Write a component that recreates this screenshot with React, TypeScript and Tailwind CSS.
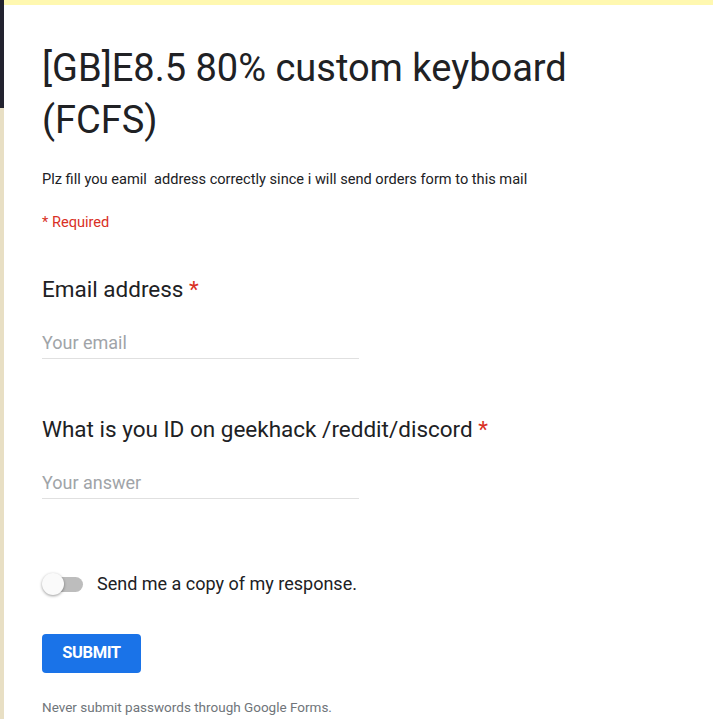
export default function App() {
  return (
    <div className="min-h-screen flex bg-white font-['Roboto','Liberation_Sans',sans-serif]">
      <div className="w-1 shrink-0 flex flex-col">
        <div className="h-[108px] bg-[#23232f]" />
        <div className="flex-1 bg-[#e8dfc4]" />
      </div>
      <div className="flex-1 flex flex-col">
        <div className="h-[5px] bg-[#fff8b0]" />
        <div className="pl-[38px] pt-[37px] pr-6 pb-4">
          <h1 className="max-w-[580px] text-[38px] leading-[52px] text-[#202124] font-normal">
            [GB]E8.5 80% custom keyboard (FCFS)
          </h1>
          <p className="mt-[23px] text-[14.6px] leading-5 text-[#202124] whitespace-pre">
            Plz fill you eamil  address correctly since i will send orders form to this mail
          </p>
          <p className="mt-[23px] text-[14.6px] leading-5 text-[#d93025]">* Required</p>

          <div className="mt-[43px]">
            <div className="text-[22.5px] leading-7 text-[#202124]">
              Email address <span className="text-[#d93025]">*</span>
            </div>
            <div className="mt-[26px] w-[317px] border-b border-[#e0e0e0] h-[30px] pb-px flex items-center">
              <span className="text-lg text-[#a0a4a8]">Your email</span>
            </div>
          </div>

          <div className="mt-[56px]">
            <div className="text-[22.5px] leading-7 text-[#202124]">
              What is you ID on geekhack /reddit/discord <span className="text-[#d93025]">*</span>
            </div>
            <div className="mt-[26px] w-[317px] border-b border-[#e0e0e0] h-[30px] pb-px flex items-center">
              <span className="text-lg text-[#a0a4a8]">Your answer</span>
            </div>
          </div>

          <div className="mt-[73px] flex items-center h-6">
            <div className="relative w-[41px] h-[22px] flex items-center">
              <div className="ml-2 w-[33px] h-[15px] rounded-full bg-[#bdbdbd]" />
              <div className="absolute left-0 top-0 w-[22px] h-[22px] rounded-full bg-[#fafafa] shadow-[0_1px_3px_rgba(0,0,0,0.4)]" />
            </div>
            <span className="ml-[14px] text-lg text-[#202124]">Send me a copy of my response.</span>
          </div>

          <button className="mt-[38px] w-[99px] h-[39px] rounded bg-[#1a73e8] text-white text-[16.5px] font-bold tracking-tight">
            SUBMIT
          </button>

          <p className="mt-6 text-[13.5px] leading-5 text-[#70757a]">
            Never submit passwords through Google Forms.
          </p>
        </div>
      </div>
    </div>
  );
}
